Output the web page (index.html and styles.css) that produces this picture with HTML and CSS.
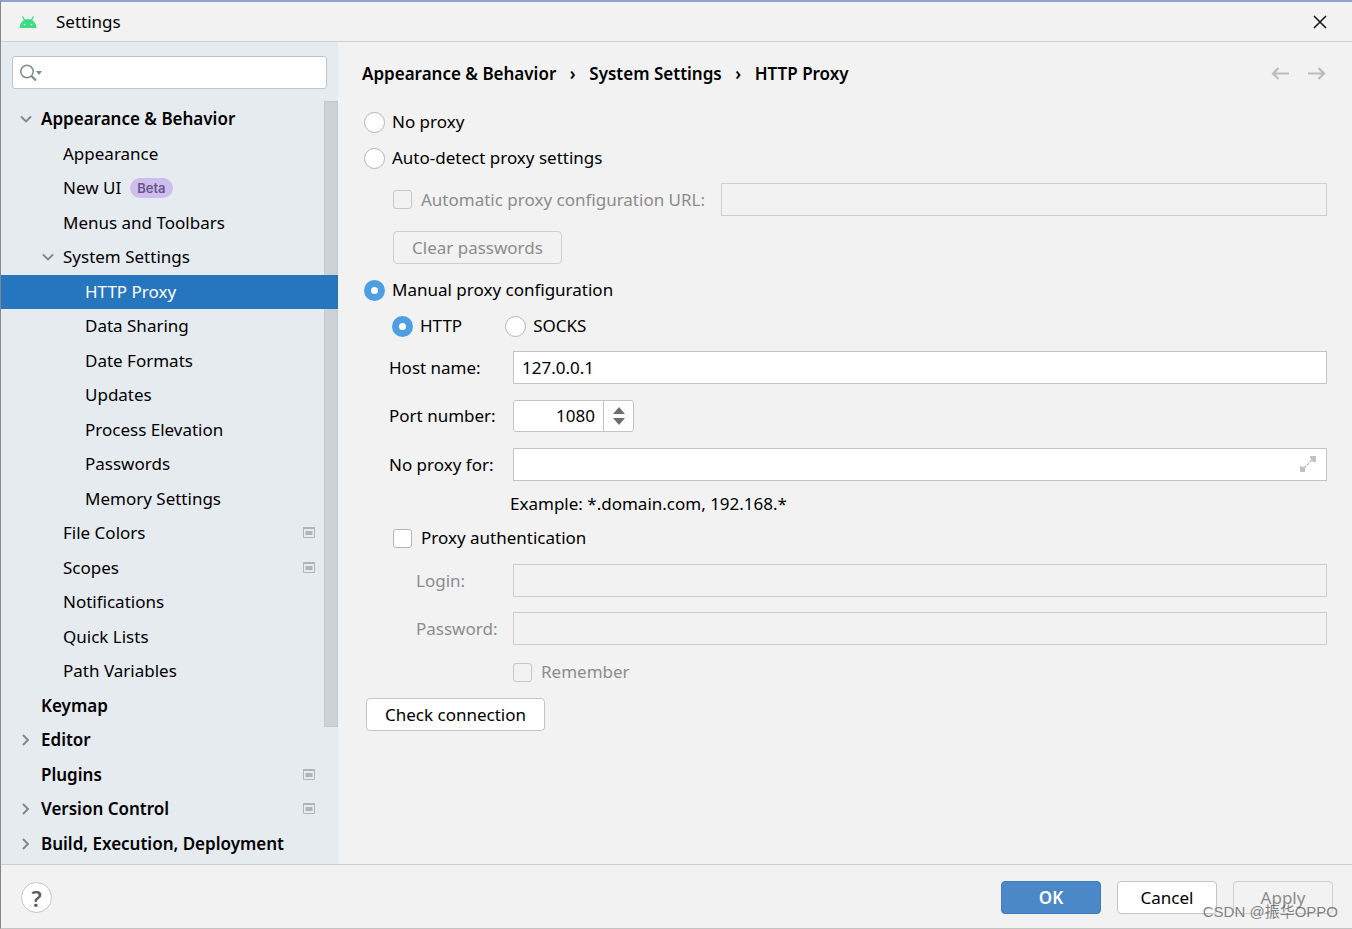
FILE: index.html
```html
<!DOCTYPE html>
<html lang="en">

<head>
	<meta charset="utf-8" />
	<meta name="viewport" content="width=device-width, initial-scale=1.0" />
	<title>Settings</title>
	<link rel="stylesheet" href="styles.css">
</head>

<body>
	<!-- shared icons -->
	<svg class="defs" aria-hidden="true">
		<symbol id="chevron-down" viewBox="0 0 14 14"><path d="M2 4.5l5 5 5-5" fill="none" stroke="#7f868c" stroke-width="1.9" /></symbol>
		<symbol id="chevron-right" viewBox="0 0 14 14"><path d="M4 2l5 5-5 5" fill="none" stroke="#7f868c" stroke-width="1.9" /></symbol>
		<symbol id="project" viewBox="0 0 12 12">
			<path d="M.5.5h11v10H.5z" fill="none" stroke="#b1b5b8" />
			<path d="M0 0h12v2H0zM2.500 4h7v4h-7z" fill="#b1b5b8" />
		</symbol>
	</svg>

	<header class="titlebar">
		<svg class="android" viewBox="0 0 18 12" aria-hidden="true">
			<path d="M.5 12C.5 7.500 4 3 9 3s8.500 4.500 8.500 9z" fill="#3ddc84" />
			<path d="M3.500.5l2.500 4.500M14.500.5L12 5" stroke="#3ddc84" stroke-width="1.400" />
			<circle cx="5.500" cy="8.500" r=".8" fill="#fff" />
			<circle cx="12.500" cy="8.500" r=".8" fill="#fff" />
		</svg>
		<h1>Settings</h1>
		<button class="icon-button" aria-label="Close">
			<svg width="14" height="14" viewBox="0 0 14 14"><path d="M1 1l12 12M13 1L1 13" stroke="#111" stroke-width="1.500" /></svg>
		</button>
	</header>

	<div class="body">
		<aside class="sidebar">
			<div class="search">
				<svg width="24" height="18" viewBox="0 0 24 18" aria-hidden="true">
					<circle cx="7" cy="7.500" r="6.200" fill="none" stroke="#7f8b91" stroke-width="1.500" />
					<path d="M11.500 12l4.500 4.500" stroke="#7f8b91" stroke-width="2.200" />
					<path d="M16 7h6l-3 4z" fill="#7f8b91" />
				</svg>
				<input type="text" aria-label="Search settings">
			</div>
			<nav class="tree-wrap" aria-label="Settings pages">
				<ul class="tree">
					<li class="top"><svg class="arrow"><use href="#chevron-down" /></svg><a href="#">Appearance &amp; Behavior</a></li>
					<li class="sub"><a href="#">Appearance</a></li>
					<li class="sub"><a href="#">New UI</a><span class="badge">Beta</span></li>
					<li class="sub"><a href="#">Menus and Toolbars</a></li>
					<li class="sub"><svg class="arrow"><use href="#chevron-down" /></svg><a href="#">System Settings</a></li>
					<li class="leaf selected"><a href="#" aria-current="page">HTTP Proxy</a></li>
					<li class="leaf"><a href="#">Data Sharing</a></li>
					<li class="leaf"><a href="#">Date Formats</a></li>
					<li class="leaf"><a href="#">Updates</a></li>
					<li class="leaf"><a href="#">Process Elevation</a></li>
					<li class="leaf"><a href="#">Passwords</a></li>
					<li class="leaf"><a href="#">Memory Settings</a></li>
					<li class="sub"><a href="#">File Colors</a><svg class="project"><use href="#project" /></svg></li>
					<li class="sub"><a href="#">Scopes</a><svg class="project"><use href="#project" /></svg></li>
					<li class="sub"><a href="#">Notifications</a></li>
					<li class="sub"><a href="#">Quick Lists</a></li>
					<li class="sub"><a href="#">Path Variables</a></li>
					<li class="top"><a href="#">Keymap</a></li>
					<li class="top"><svg class="arrow"><use href="#chevron-right" /></svg><a href="#">Editor</a></li>
					<li class="top"><a href="#">Plugins</a><svg class="project"><use href="#project" /></svg></li>
					<li class="top"><svg class="arrow"><use href="#chevron-right" /></svg><a href="#">Version Control</a><svg class="project"><use href="#project" /></svg></li>
					<li class="top"><svg class="arrow"><use href="#chevron-right" /></svg><a href="#">Build, Execution, Deployment</a></li>
				</ul>
				<div class="scrollbar"></div>
			</nav>
		</aside>

		<main class="content">
			<div class="crumbs">
				<a href="#">Appearance &amp; Behavior</a>
				<span class="sep">›</span>
				<a href="#">System Settings</a>
				<span class="sep">›</span>
				<a href="#">HTTP Proxy</a>
				<div class="history">
					<button class="icon-button" aria-label="Back" disabled>
						<svg width="18" height="14" viewBox="0 0 18 14"><path d="M18 6.500H2M7.500 1L2 6.500 7.500 12" fill="none" stroke="#bcbcbc" stroke-width="2.200" /></svg>
					</button>
					<button class="icon-button" aria-label="Forward" disabled>
						<svg width="18" height="14" viewBox="0 0 18 14"><path d="M0 6.500h16M10.500 1L16 6.500 10.500 12" fill="none" stroke="#bcbcbc" stroke-width="2.200" /></svg>
					</button>
				</div>
			</div>

			<form>
				<label class="option"><input type="radio" name="mode">No proxy</label>
				<label class="option"><input type="radio" name="mode">Auto-detect proxy settings</label>
				<div class="auto">
					<div class="auto-url">
						<label class="check disabled"><input type="checkbox" disabled>Automatic proxy configuration URL:</label>
						<input class="field" type="text" aria-label="Configuration URL" disabled>
					</div>
					<button class="button" type="button" disabled>Clear passwords</button>
				</div>
				<label class="option"><input type="radio" name="mode" checked>Manual proxy configuration</label>
				<div class="protocols">
					<label class="option"><input type="radio" name="protocol" checked>HTTP</label>
					<label class="option"><input type="radio" name="protocol">SOCKS</label>
				</div>
				<div class="rows">
					<label for="host">Host name:</label>
					<input class="field" id="host" type="text" value="127.0.0.1">
					<label for="port">Port number:</label>
					<div class="spinner">
						<input id="port" type="text" inputmode="numeric" value="1080">
						<button type="button" aria-label="Change port">
							<svg width="14" height="20" viewBox="0 0 14 20"><path d="M1 8l6-7 6 7zM1 12l6 7 6-7z" fill="#6e6e6e" /></svg>
						</button>
					</div>
					<label for="bypass">No proxy for:</label>
					<div class="expandable">
						<input class="field" id="bypass" type="text">
						<svg width="18" height="18" viewBox="0 0 18 18" aria-hidden="true">
							<path d="M11 1h6v6h-3l-3-4zM1 11l4 1 1 1v4H1z" fill="#c2c2c2" />
							<path d="M5 13l8-8" stroke="#c2c2c2" stroke-width="1.500" stroke-dasharray="3 1" />
						</svg>
					</div>
				</div>
				<p class="example">Example: *.domain.com, 192.168.*</p>
				<label class="check auth"><input type="checkbox">Proxy authentication</label>
				<div class="rows credentials">
					<label for="login">Login:</label>
					<input class="field" id="login" type="text" disabled>
					<label for="password">Password:</label>
					<input class="field" id="password" type="password" disabled>
				</div>
				<label class="check remember disabled"><input type="checkbox" disabled>Remember</label>
				<button class="button" type="button">Check connection</button>
			</form>
		</main>
	</div>

	<footer class="footer">
		<button class="help" aria-label="Help">?</button>
		<div class="actions">
			<button class="button primary">OK</button>
			<button class="button">Cancel</button>
			<button class="button" disabled>Apply</button>
		</div>
		<span class="watermark">CSDN @振华OPPO</span>
	</footer>
</body>

</html>
```
FILE: styles.css
```css
* {
	box-sizing: border-box;
}

body {
	display: flex;
	flex-direction: column;
	min-height: 100vh;
	margin: 0;
	border-top: 2px solid #8fa5d0;
	border-left: 1px solid #85878a;
	border-bottom: 1px solid #c4c4c4;
	background: #f2f2f2;
	color: #000;
	font: 17px/24px "Noto Sans", "Noto Sans CJK SC", sans-serif;
}

input,
button {
	font: inherit;
	color: inherit;
}

a {
	color: inherit;
	text-decoration: none;
}

.defs {
	display: none;
}

.icon-button {
	display: flex;
	padding: 0;
	border: 0;
	background: none;
}

/* title bar */
.titlebar {
	display: flex;
	align-items: center;
	height: 40px;
	padding: 0 25px 0 18px;
	border-bottom: 1px solid #cfcfcf;
}

.titlebar h1 {
	flex: 1;
	margin: 0 0 0 19px;
	font-size: 17px;
	font-weight: 400;
}

.android {
	width: 18px;
	height: 12px;
}

.body {
	display: flex;
	flex: 1;
}

/* sidebar */
.sidebar {
	display: flex;
	flex-direction: column;
	flex: 0 0 337px;
	background: #e6ebf0;
}

.search {
	display: flex;
	align-items: center;
	height: 33px;
	margin: 14px 11px 12px;
	padding-left: 7px;
	border: 1px solid #c0c4c8;
	border-radius: 3px;
	background: #fff;
}

.search input {
	flex: 1;
	min-width: 0;
	border: 0;
	outline: 0;
	background: none;
}

.tree-wrap {
	position: relative;
	display: flex;
	flex: 1;
}

.tree {
	display: flex;
	flex-direction: column;
	flex: 1;
	margin: 0;
	padding: 1px 0 3px;
	list-style: none;
}

.tree li {
	display: flex;
	align-items: center;
	flex: 1;
	padding-right: 23px;
}

.top {
	padding-left: 40px;
	font-weight: 600;
}

.sub {
	padding-left: 62px;
}

.leaf {
	padding-left: 84px;
}

/* the highlight runs over the scrollbar */
.selected {
	z-index: 1;
	background: #2675bf;
	color: #fff;
}

.arrow {
	width: 14px;
	height: 14px;
	margin: 0 8px 0 -22px;
}

.project {
	width: 12px;
	height: 12px;
	margin-left: auto;
}

.badge {
	margin-left: 9px;
	padding: 0 7px;
	border-radius: 10px;
	background: #cfbdf0;
	color: #66578a;
	font: 600 13px/20px Inter, sans-serif;
}

.scrollbar {
	position: absolute;
	top: 0;
	right: 0;
	width: 14px;
	height: 82%;
	border: 1px solid rgba(0, 0, 0, 0.04);
	background: #cdd2d6;
}

/* page */
.content {
	flex: 1;
	padding: 20px 25px 20px 24px;
}

.crumbs {
	display: flex;
	align-items: center;
	margin-bottom: 18px;
	font-weight: 600;
}

.sep {
	width: 33px;
	text-align: center;
}

.history {
	display: flex;
	gap: 19px;
	margin: 0 1px 0 auto;
}

.option,
.check {
	display: flex;
	align-items: center;
	height: 36px;
}

.option input,
.check input {
	flex: none;
	appearance: none;
	border: 1px solid #b4b4b4;
	background: #fff;
}

.option input {
	width: 21px;
	height: 21px;
	margin: 0 7px 0 2px;
	border-radius: 50%;
}

.option input:checked {
	border: 7px solid #4f9ee3;
}

.check input {
	width: 19px;
	height: 19px;
	margin: 0 9px 0 0;
	border-radius: 3px;
}

.check input:disabled {
	border-color: #c6c6c6;
	background: #f2f2f2;
}

.disabled {
	color: #8c8c8c;
}

.field {
	width: 100%;
	height: 33px;
	padding: 0 8px;
	border: 1px solid #c4c4c4;
	background: #fff;
}

.field:disabled {
	border-color: #cfcfcf;
	background: #f2f2f2;
}

.button {
	height: 33px;
	padding: 0 18px;
	border: 1px solid #c4c4c4;
	border-radius: 4px;
	background: #fff;
}

.button:disabled {
	border-color: #cfcfcf;
	background: #f2f2f2;
	color: #8c8c8c;
}

.auto {
	margin: 7px 0 8px 31px;
}

.auto-url {
	display: flex;
	align-items: center;
	gap: 16px;
	height: 33px;
	margin-bottom: 15px;
}

.auto-url .check {
	flex: none;
}

.auto-url .field {
	flex: 1;
}

.protocols {
	display: flex;
	gap: 41px;
	margin: 0 0 7px 28px;
}

.rows {
	display: grid;
	grid-template-columns: 124px 1fr;
	row-gap: 16px;
	align-items: center;
	margin-left: 27px;
}

.spinner {
	display: flex;
	width: 121px;
	height: 32px;
	border: 1px solid #c4c4c4;
	border-radius: 3px;
	background: #fff;
}

.spinner input {
	flex: 1;
	min-width: 0;
	padding: 0 8px;
	border: 0;
	background: none;
	text-align: right;
}

.spinner button {
	display: flex;
	align-items: center;
	justify-content: center;
	width: 30px;
	padding: 0;
	border: 0;
	border-left: 1px solid #c4c4c4;
	background: none;
}

.expandable {
	position: relative;
	display: flex;
}

.expandable svg {
	position: absolute;
	top: 7px;
	right: 10px;
}

.example {
	margin: 11px 0 4px 148px;
}

.auth {
	margin-left: 31px;
}

.credentials {
	grid-template-columns: 97px 1fr;
	row-gap: 15px;
	margin: 8px 0 9px 54px;
	color: #8c8c8c;
}

.remember {
	margin: 0 0 8px 151px;
}

form > .button {
	margin-left: 4px;
}

/* bottom bar */
.footer {
	position: relative;
	display: flex;
	align-items: center;
	justify-content: space-between;
	height: 64px;
	padding: 2px 19px 0 20px;
	border-top: 1px solid #cfcfcf;
}

.help {
	width: 31px;
	height: 31px;
	padding: 0;
	border: 1px solid #c4c4c4;
	border-radius: 50%;
	background: #fff;
	color: #5e5e5e;
	font-size: 22px;
	font-weight: 600;
	line-height: 28px;
}

.actions {
	display: flex;
	gap: 16px;
}

.actions .button {
	width: 100px;
}

.actions .primary {
	border-color: #3f7dbd;
	background: #4a88c7;
	color: #fff;
	font-weight: 600;
}

.watermark {
	position: absolute;
	right: 14px;
	bottom: 4px;
	color: rgba(90, 90, 90, 0.75);
	font: 15px/24px "Liberation Sans", "Noto Sans CJK SC", sans-serif;
}
```
